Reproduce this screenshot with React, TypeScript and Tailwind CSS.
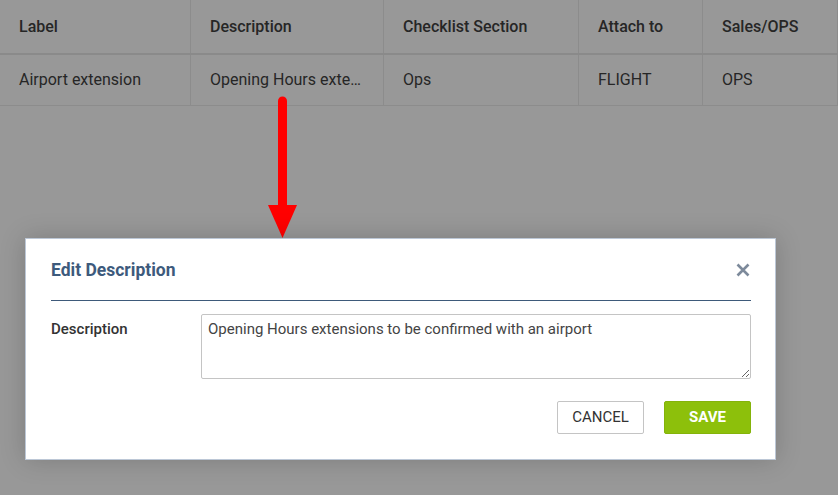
import React from 'react';

const headCN = 'flex items-center border-r border-[#8c8c8c] pl-[19px] text-[16px] font-medium text-[#262626]';
const cellCN = 'flex items-center border-r border-[#8c8c8c] pl-[19px] text-[16px] text-[#262626]';

const cols = [191, 193, 195, 124, 135];
const heads = ['Label', 'Description', 'Checklist Section', 'Attach to', 'Sales/OPS'];
const row = ['Airport extension', 'Opening Hours exte…', 'Ops', 'FLIGHT', 'OPS'];

const App = () => {
  return (
    <div className="relative h-[495px] w-[838px] overflow-hidden bg-[#989898] font-['Roboto',sans-serif]">
      <div className="flex h-[55px] border-b-2 border-[#8a8a8a]">
        {heads.map((h, i) => (
          <div key={h} className={headCN} style={{ width: cols[i] }}>
            {h}
          </div>
        ))}
      </div>
      <div className="flex h-[51px] border-b border-[#8c8c8c]">
        {row.map((c, i) => (
          <div key={i} className={cellCN} style={{ width: cols[i] }}>
            {c}
          </div>
        ))}
      </div>

      {/* red arrow */}
      <svg className="absolute left-[264px] top-[94px]" width="38" height="146" viewBox="0 0 38 146">
        <line x1="18.5" y1="7" x2="18.5" y2="114" stroke="#ff0000" strokeWidth="9" strokeLinecap="round" />
        <polygon points="4,111 33,111 18.5,144" fill="#ff0000" />
      </svg>

      <div className="absolute left-[25px] top-[238px] flex h-[222px] w-[751px] flex-col border border-[#bcc7d6] bg-white pl-[25px] pr-[24px] shadow-[0_0_24px_rgba(0,0,0,0.18)]">
        <div className="flex h-[62px] items-center justify-between border-b border-[#3e5a7a] pt-[1px]">
          <span className="text-[17.5px] font-bold text-[#3d5a7c]">Edit Description</span>
          <svg width="14" height="14" viewBox="0 0 14 14" className="mr-[1px]">
            <path d="M1.5 1.5 L12.5 12.5 M12.5 1.5 L1.5 12.5" stroke="#7d8a9b" strokeWidth="2.6" />
          </svg>
        </div>
        <div className="mt-[13px] flex">
          <div className="w-[150px] pt-[4px] text-[15px] font-medium text-[#333]">Description</div>
          <textarea
            className="h-[65px] w-[550px] resize-y rounded-[2px] border border-[#c4c4c4] px-[6px] py-[4px] text-[15px] leading-[20px] text-[#444] outline-none"
            defaultValue="Opening Hours extensions to be confirmed with an airport"
          />
        </div>
        <div className="mt-[22px] flex justify-end gap-[20px]">
          <button className="h-[33px] w-[87px] rounded-[2px] border border-[#c4c4c4] bg-white text-[15px] text-[#333]">
            CANCEL
          </button>
          <button className="h-[33px] w-[87px] rounded-[2px] border border-[#84b30a] bg-[#8dc00b] text-[15px] font-bold text-white">
            SAVE
          </button>
        </div>
      </div>
    </div>
  );
};

export default App;
